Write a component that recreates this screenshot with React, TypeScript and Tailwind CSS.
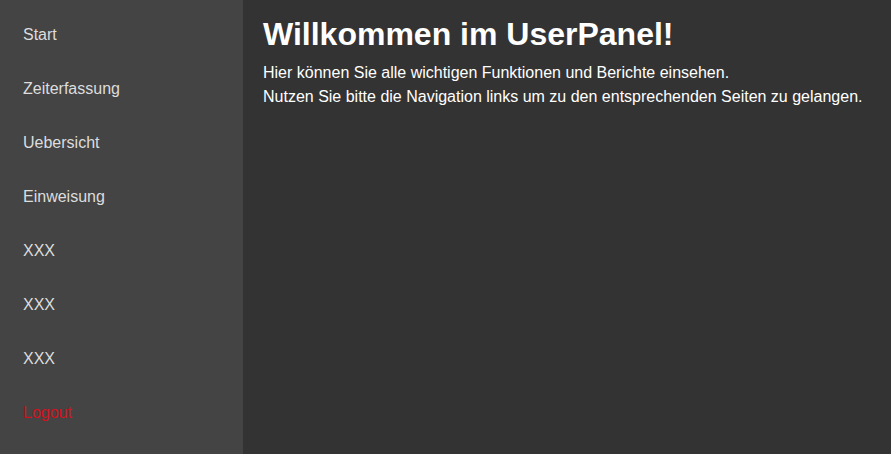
const navItems = [
  "Start",
  "Zeiterfassung",
  "Uebersicht",
  "Einweisung",
  "XXX",
  "XXX",
  "XXX",
];

export default function App() {
  return (
    <div className="flex h-[454px] w-full font-['Liberation_Sans',Arial,sans-serif] bg-[#333333]">
      <nav className="flex w-[243px] shrink-0 flex-col bg-[#444444] pt-[8px]">
        {navItems.map((item, i) => (
          <a
            key={i}
            href="#"
            className="flex h-[54px] items-center pl-[23px] text-base text-[#dddddd]"
          >
            {item}
          </a>
        ))}
        <a
          href="#"
          className="flex h-[54px] items-center pl-[23px] text-base text-[#d4101c]"
        >
          Logout
        </a>
      </nav>

      <main className="flex-1 px-5 pt-4 text-white">
        <h1 className="text-[32px] font-bold leading-[37px]">
          Willkommen im UserPanel!
        </h1>
        <p className="mt-[8px] text-base leading-6">
          Hier können Sie alle wichtigen Funktionen und Berichte einsehen.
          <br />
          Nutzen Sie bitte die Navigation links um zu den entsprechenden Seiten
          zu gelangen.
        </p>
      </main>
    </div>
  );
}
